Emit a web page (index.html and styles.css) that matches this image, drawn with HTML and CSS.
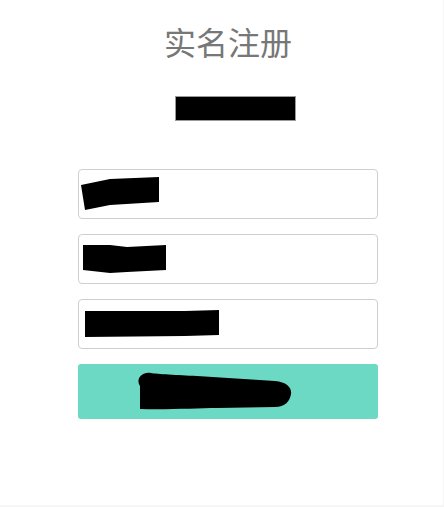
FILE: index.html
```html
<!DOCTYPE html>
<html lang="zh">
<head>
<meta charset="utf-8">
<title>实名注册</title>
<link rel="stylesheet" href="styles.css">
</head>
<body>
<div class="page">
  <div class="form">
    <h1 class="title">实名注册</h1>
    <div class="subtitle"><span class="mask-box"></span></div>
    <div class="field field-a">
      <svg class="mask" width="80" height="34" viewBox="0 0 80 34"><polygon points="0,8 29,2 78,0 78,25 29,28 4,33" fill="#000"/></svg>
    </div>
    <div class="field field-b">
      <svg class="mask" width="84" height="30" viewBox="0 0 84 30"><polygon points="0,1 27,1 44,3 83,1 83,26 44,28 27,29 0,26" fill="#000"/></svg>
    </div>
    <div class="field field-c">
      <svg class="mask" width="135" height="28" viewBox="0 0 135 28"><polygon points="0,1 100,1 134,0 134,25 100,26 0,27" fill="#000"/></svg>
    </div>
    <button class="submit" type="button">
      <svg class="mask" width="156" height="40" viewBox="0 0 156 40"><path d="M3,37 L3,14 C-2,6 6,-1 14,1 C20,2 40,3 60,4 L138,9 C150,10 155,16 154,22 C153,29 148,35 138,35 L80,36 C60,36 30,38 3,37 Z" fill="#000"/></svg>
    </button>
  </div>
</div>
</body>
</html>
```

FILE: styles.css
```css
html {
  background: #f6f6f6;
}
body {
  margin: 0;
  font-family: "Noto Sans CJK SC", "Noto Sans", sans-serif;
}
.page {
  width: 443px;
  height: 505px;
  background: #fff;
  box-sizing: border-box;
  padding-top: 21px;
}
.form {
  width: 300px;
  margin-left: 78px;
  display: flex;
  flex-direction: column;
}
.title {
  margin: 0;
  font-size: 32px;
  line-height: 40px;
  font-weight: normal;
  color: #777;
  text-align: center;
}
.subtitle {
  height: 26px;
  margin-top: 35px;
  margin-bottom: 47px;
  padding-left: 97px;
}
.mask-box {
  display: block;
  width: 121px;
  height: 25px;
  background: #000;
  border: 0.5px solid #999;
  box-sizing: border-box;
}
.field {
  height: 50px;
  border: 1px solid #cfcfcf;
  border-radius: 4px;
  box-sizing: border-box;
  margin-bottom: 15px;
  display: flex;
  align-items: center;
}
.field-a {
  padding-left: 2px;
}
.field-b {
  padding-left: 4px;
}
.field-c {
  padding-left: 6px;
}
.mask {
  display: block;
}
.submit {
  height: 55px;
  width: 300px;
  border: none;
  border-radius: 3px;
  background: #6cd9c4;
  padding: 0 0 0 59px;
  display: flex;
  align-items: center;
  cursor: pointer;
}
```
